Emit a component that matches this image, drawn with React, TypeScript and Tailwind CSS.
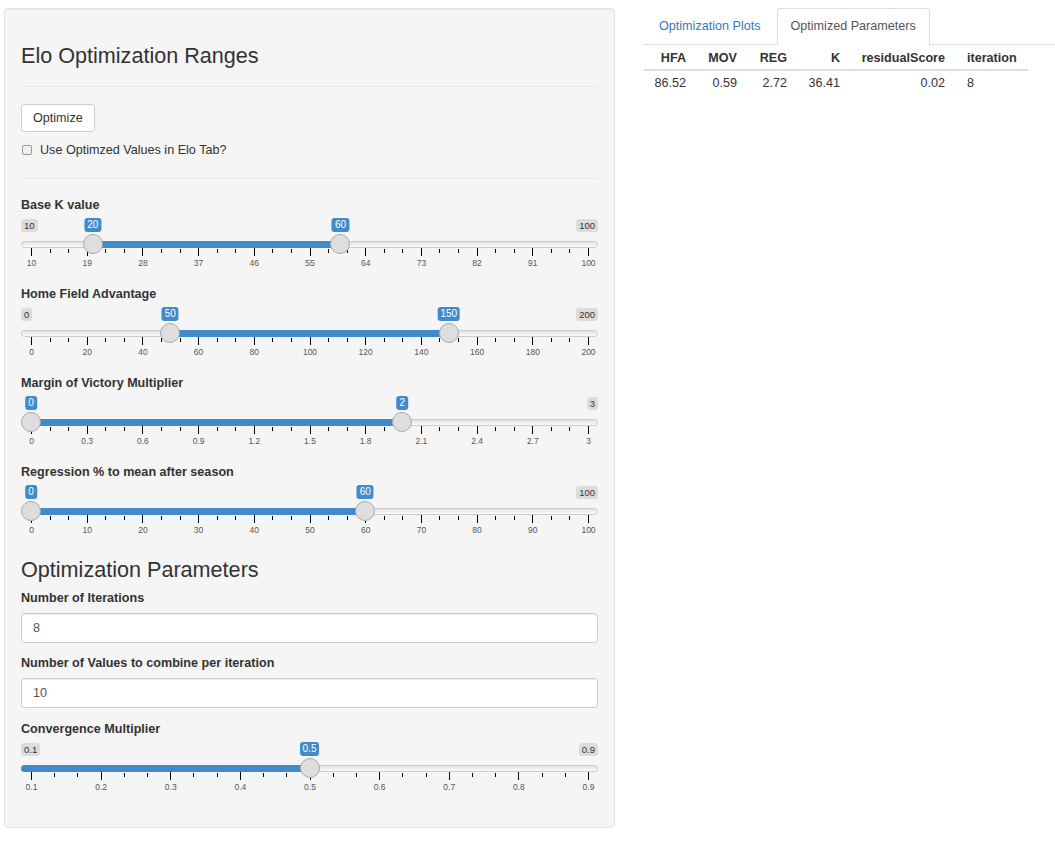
import React from 'react';

type SliderProps = {
  min: number;
  max: number;
  steps: number;
  from: number;
  to?: number;
  showMin?: boolean;
  showMax?: boolean;
};

const TRACK_W = 557;
const PAD = 10;

const fmt = (v: number) => String(parseFloat(v.toFixed(2)));

function RangeSlider({ min, max, steps, from, to, showMin = true, showMax = true }: SliderProps) {
  const px = (v: number) => PAD + ((v - min) / (max - min)) * TRACK_W;
  const stepVal = (max - min) / steps;
  const fromX = px(from);
  const toX = to !== undefined ? px(to) : null;
  const barLeft = toX === null ? 0 : fromX;
  const barRight = toX === null ? fromX : toX;

  const minor: number[] = [];
  for (let i = 0; i < steps; i++) {
    minor.push(px(min + stepVal * (i + 1 / 3)));
    minor.push(px(min + stepVal * (i + 2 / 3)));
  }

  return (
    <div className="relative h-[62px] w-full">
      {showMin && (
        <span className="absolute left-0 top-[1px] h-[13px] rounded-[3px] bg-[#dcdcdc] px-[3px] text-[9.5px] leading-[13px] text-[#333]">
          {fmt(min)}
        </span>
      )}
      {showMax && (
        <span className="absolute right-0 top-[1px] h-[13px] rounded-[3px] bg-[#dcdcdc] px-[3px] text-[9.5px] leading-[13px] text-[#333]">
          {fmt(max)}
        </span>
      )}

      {/* line + bar */}
      <div className="absolute left-0 right-0 top-[23px] h-[7px] rounded-full border border-[#ccc] bg-gradient-to-b from-[#e2e2e2] to-[#fbfbfb]" />
      <div
        className={`absolute top-[23px] h-[7px] bg-[#428bca] ${toX === null ? 'rounded-l-full' : ''}`}
        style={{ left: barLeft, width: barRight - barLeft }}
      />

      {/* grid */}
      {Array.from({ length: steps + 1 }, (_, i) => {
        const x = px(min + stepVal * i);
        return (
          <React.Fragment key={i}>
            <span className="absolute top-[30px] h-[8px] w-px bg-black" style={{ left: x }} />
            <span
              className="absolute top-[40px] -translate-x-1/2 text-[8.5px] leading-[10px] text-[#555]"
              style={{ left: x + 0.5 }}
            >
              {fmt(min + stepVal * i)}
            </span>
          </React.Fragment>
        );
      })}
      {minor.map((x, i) => (
        <span key={i} className="absolute top-[31px] h-[4px] w-px bg-black" style={{ left: x }} />
      ))}

      {/* handles + value labels */}
      {[from, ...(to !== undefined ? [to] : [])].map((v, i) => {
        const x = px(v);
        return (
          <React.Fragment key={i}>
            <span
              className="absolute top-0 h-[14px] -translate-x-1/2 rounded-[3px] bg-[#428bca] px-[3px] text-[10px] leading-[14px] text-white"
              style={{ left: x }}
            >
              {fmt(v)}
            </span>
            <span
              className="absolute top-[16px] h-[20px] w-[20px] rounded-full border border-[#aaa] bg-[#dedede]"
              style={{ left: x - 10 }}
            />
          </React.Fragment>
        );
      })}
    </div>
  );
}

function SliderBlock({ label, ...props }: SliderProps & { label: string }) {
  return (
    <div className="mb-[5px]">
      <div className="mb-[4px] h-[18px] text-[12.6px] font-bold leading-[18px] text-[#333]">{label}</div>
      <RangeSlider {...props} />
    </div>
  );
}

function TextInput({ value }: { value: string }) {
  return (
    <div className="mt-[6px] flex h-[30px] w-full items-center rounded-[3.6px] border border-[#ccc] bg-white px-[11px] text-[12.6px] text-[#555] shadow-[inset_0_1px_1px_rgba(0,0,0,0.075)]">
      {value}
    </div>
  );
}

const cols = [
  { h: 'HFA', v: '86.52', w: 'w-[49px]' },
  { h: 'MOV', v: '0.59', w: 'w-[51px]' },
  { h: 'REG', v: '2.72', w: 'w-[50px]' },
  { h: 'K', v: '36.41', w: 'w-[53px]' },
  { h: 'residualScore', v: '0.02', w: 'w-[105px]' },
];

export default function App() {
  return (
    <div className="flex min-h-screen items-start bg-white pt-[8px] font-['Liberation_Sans',Arial,sans-serif] text-[#333]">
      {/* left well */}
      <div className="ml-[4px] w-[611px] shrink-0 rounded-[4px] border border-[#e3e3e3] bg-[#f5f5f5] px-[16px] pb-[23px] pt-[17px] shadow-[inset_0_1px_1px_rgba(0,0,0,0.05)]">
        <h3 className="mt-[18px] h-[24px] text-[21.6px] leading-[24px]">Elo Optimization Ranges</h3>
        <hr className="mt-[18px] border-t border-[#e6e6e6]" />

        <button className="mt-[17px] h-[28px] rounded-[3.6px] border border-[#ccc] bg-white px-[11px] text-[12.6px] text-[#333]">
          Optimize
        </button>
        <div className="mt-[9px] flex h-[18px] items-center text-[12.6px]">
          <span className="ml-[1px] h-[10px] w-[10px] rounded-[2px] border border-[#999] bg-[#eee]" />
          <span className="ml-[8px]">Use Optimzed Values in Elo Tab?</span>
        </div>
        <hr className="mt-[19px] border-t border-[#e6e6e6]" />

        <div className="mt-[17px]">
          <SliderBlock label="Base K value" min={10} max={100} steps={10} from={20} to={60} />
          <SliderBlock label="Home Field Advantage" min={0} max={200} steps={10} from={50} to={150} />
          <SliderBlock label="Margin of Victory Multiplier" min={0} max={3} steps={10} from={0} to={2} showMin={false} />
          <SliderBlock label="Regression % to mean after season" min={0} max={100} steps={10} from={0} to={60} showMin={false} />
        </div>

        <h3 className="mt-[11px] h-[24px] text-[21.6px] leading-[24px]">Optimization Parameters</h3>
        <div className="mt-[7px] h-[18px] text-[12.6px] font-bold leading-[18px]">Number of Iterations</div>
        <TextInput value="8" />
        <div className="mt-[11px] h-[18px] text-[12.6px] font-bold leading-[18px]">Number of Values to combine per iteration</div>
        <TextInput value="10" />
        <div className="mt-[12px] mb-[4px] h-[18px] text-[12.6px] font-bold leading-[18px]">Convergence Multiplier</div>
        <RangeSlider min={0.1} max={0.9} steps={8} from={0.5} />
      </div>

      {/* right side */}
      <div className="ml-[29px] flex-1">
        <div className="flex h-[37px] items-start border-b border-[#ddd] text-[12.6px]">
          <div className="ml-[1px] flex h-[36px] items-center px-[14px] text-[#337ab7]">Optimization Plots</div>
          <div className="ml-[2px] flex h-[37px] items-center rounded-t-[3.6px] border border-b-0 border-[#ddd] bg-white px-[13px] pb-px text-[#555]">
            Optimized Parameters
          </div>
        </div>
        <table className="table-fixed border-collapse text-[12.6px]">
          <thead>
            <tr className="border-b-2 border-[#ddd]">
              {cols.map((c) => (
                <th key={c.h} className={`${c.w} px-[7px] pb-[2px] pt-[4px] text-right align-bottom font-bold leading-[18px]`}>
                  {c.h}
                </th>
              ))}
              <th className="w-[76px] pb-[2px] pl-[15px] pr-[7px] pt-[4px] text-left align-bottom font-bold leading-[18px]">
                iteration
              </th>
            </tr>
          </thead>
          <tbody>
            <tr>
              {cols.map((c) => (
                <td key={c.h} className="px-[7px] pb-[5px] pt-[3px] text-right leading-[18px]">
                  {c.v}
                </td>
              ))}
              <td className="pb-[5px] pl-[15px] pr-[7px] pt-[3px] text-left leading-[18px]">8</td>
            </tr>
          </tbody>
        </table>
      </div>
    </div>
  );
}
